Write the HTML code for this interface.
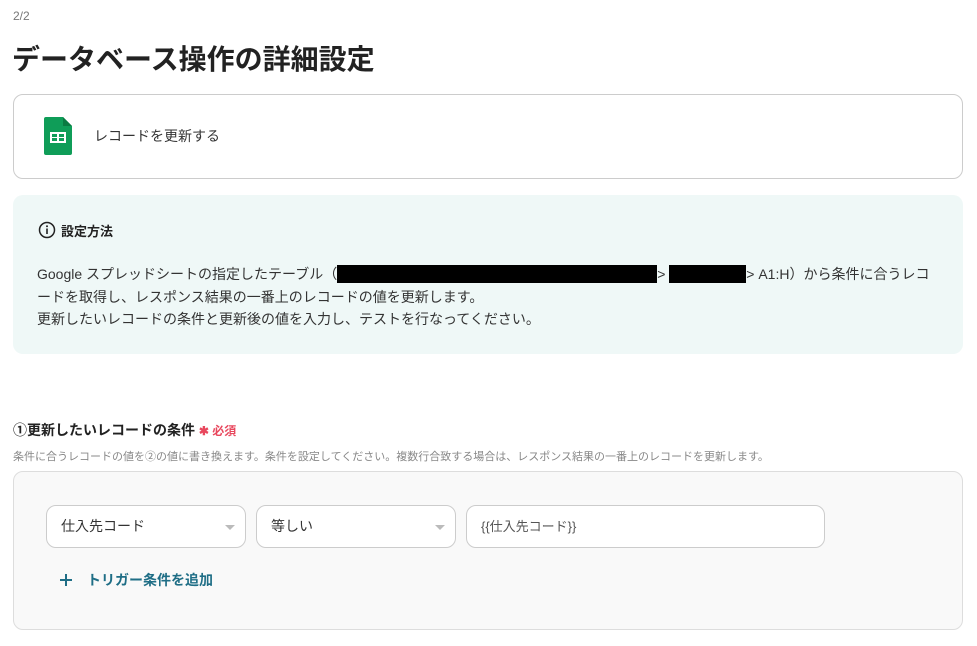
<!DOCTYPE html>
<html><head><meta charset="utf-8"><style>
*{box-sizing:border-box;margin:0;padding:0}
body{width:977px;height:646px;background:#fff;font-family:"Liberation Sans","Noto Sans CJK JP",sans-serif;color:#333;position:relative;overflow:hidden}
.a{position:absolute}
.sel{position:absolute;top:505px;height:43px;border:1px solid #ccc;border-radius:10px;background:#fff;font-size:14px;padding:0 14px;line-height:41px;color:#333}
.tri{position:absolute;right:10px;top:19px;width:0;height:0;border-left:5px solid transparent;border-right:5px solid transparent;border-top:5px solid #bbb}
.blk{display:inline-block;background:#000;height:18px;vertical-align:-4px}
</style></head><body>
<div class="a" style="left:13px;top:9px;font-size:12px;color:#777">2/2</div>
<div class="a" style="left:12px;top:41px;font-size:28px;font-weight:bold;color:#222;line-height:38px">データベース操作の詳細設定</div>
<div class="a" style="left:13px;top:94px;width:950px;height:85px;border:1px solid #ccc;border-radius:10px"></div>
<svg class="a" style="left:44px;top:117px" width="28" height="38" viewBox="0 0 28 38">
<path d="M2 0H19L28 9V36a2 2 0 0 1-2 2H2a2 2 0 0 1-2-2V2a2 2 0 0 1 2-2z" fill="#0f9d58"/>
<path d="M19 0V9H28z" fill="#0a7a42"/>
<rect x="6" y="15" width="16" height="11" fill="#fff"/>
<rect x="8" y="17" width="5" height="3" fill="#0f9d58"/><rect x="15" y="17" width="5" height="3" fill="#0f9d58"/>
<rect x="8" y="21" width="5" height="3" fill="#0f9d58"/><rect x="15" y="21" width="5" height="3" fill="#0f9d58"/>
</svg>
<div class="a" style="left:94px;top:126px;font-size:14px;color:#333">レコードを更新する</div>
<div class="a" style="left:13px;top:195px;width:950px;height:159px;background:#eff8f7;border-radius:10px"></div>
<svg class="a" style="left:38px;top:221px" width="18" height="18" viewBox="0 0 18 18"><circle cx="9" cy="9" r="7.5" fill="none" stroke="#222" stroke-width="1.5"/><rect x="8.2" y="7.5" width="1.6" height="5.5" fill="#222"/><circle cx="9" cy="5.2" r="1" fill="#222"/></svg>
<div class="a" style="left:61px;top:221px;font-size:13px;font-weight:bold;color:#222">設定方法</div>
<div class="a" style="left:37px;top:263px;font-size:14px;line-height:22.5px;color:#333;width:900px">Google スプレッドシートの指定したテーブル（<span class="blk" style="width:320px"></span>&gt; <span class="blk" style="width:77px"></span>&gt; A1:H）から条件に合うレコードを取得し、レスポンス結果の一番上のレコードの値を更新します。<br>更新したいレコードの条件と更新後の値を入力し、テストを行なってください。</div>
<div class="a" style="left:13px;top:420px;font-size:14px;font-weight:bold;color:#222">①更新したいレコードの条件 <span style="color:#e8475d;font-size:12px">✱ 必須</span></div>
<div class="a" style="left:13px;top:448px;font-size:11px;color:#888">条件に合うレコードの値を②の値に書き換えます。条件を設定してください。複数行合致する場合は、レスポンス結果の一番上のレコードを更新します。</div>
<div class="a" style="left:13px;top:471px;width:950px;height:159px;background:#f9f9f9;border:1px solid #ddd;border-radius:10px"></div>
<div class="sel" style="left:46px;width:200px">仕入先コード<div class="tri"></div></div>
<div class="sel" style="left:256px;width:200px">等しい<div class="tri"></div></div>
<div class="sel" style="left:466px;width:359px;font-size:13px;color:#555">{{仕入先コード}}</div>
<svg class="a" style="left:59px;top:573px" width="14" height="14" viewBox="0 0 14 14"><path d="M7 1V13M1 7H13" stroke="#1f6e86" stroke-width="2"/></svg>
<div class="a" style="left:87px;top:570px;font-size:14px;font-weight:bold;color:#1f6e86">トリガー条件を追加</div>
</body></html>
